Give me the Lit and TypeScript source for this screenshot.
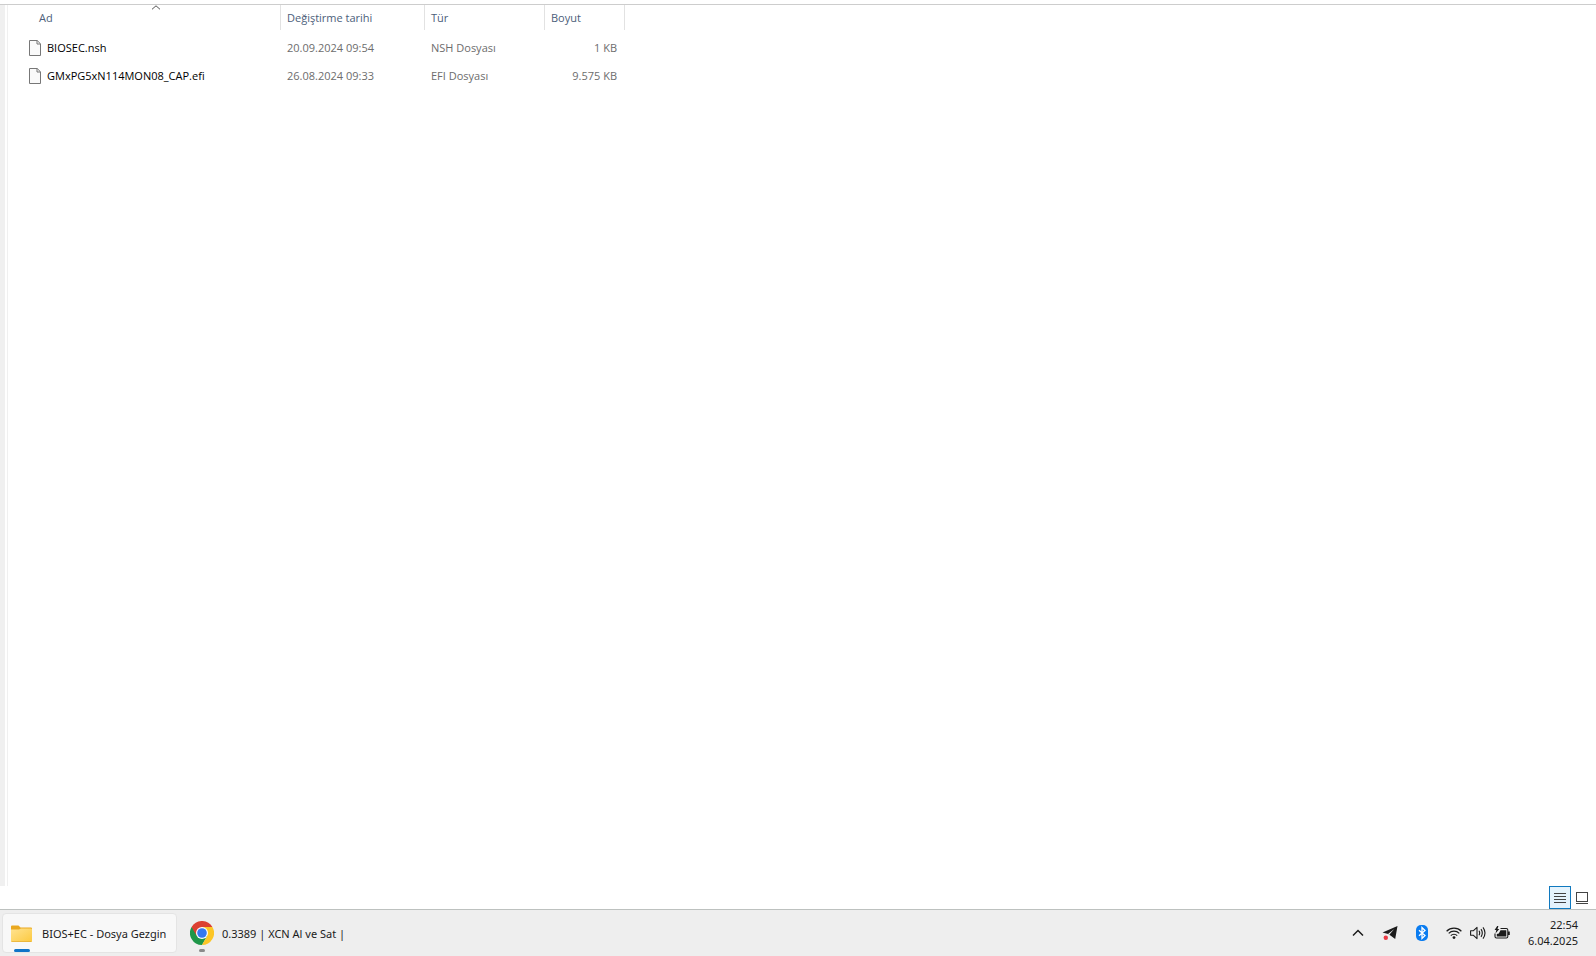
import { LitElement, html, svg, css } from "lit";
import { customElement, state } from "lit/decorators.js";

interface FileRow {
  name: string;
  modified: string;
  type: string;
  size: string;
}

const FILES: FileRow[] = [
  { name: "BIOSEC.nsh", modified: "20.09.2024 09:54", type: "NSH Dosyası", size: "1 KB" },
  { name: "GMxPG5xN114MON08_CAP.efi", modified: "26.08.2024 09:33", type: "EFI Dosyası", size: "9.575 KB" },
];

@customElement("file-list")
class FileList extends LitElement {
  static styles = css`
    :host { display: block; }
    .table { border-collapse: separate; border-spacing: 0; table-layout: fixed; width: 617px; font-size: 11px; line-height: 16px; }
    .name-col { width: 273px; }
    .date-col { width: 144px; }
    .type-col { width: 120px; }
    .size-col { width: 80px; }
    .head { padding: 0 0 4px; font-weight: 400; text-align: left; }
    .sort { position: relative; display: block; box-sizing: border-box; width: 100%; height: 25px; padding: 0 6px; border: 0; border-right: 1px solid #e2e2e2; background: none; color: #4c607a; font: inherit; text-align: left; }
    .sort.first { padding-left: 31px; }
    .caret { position: absolute; top: 0; left: 50%; width: 10px; height: 5px; margin-left: 7px; }
    .cell { height: 28px; padding: 0 8px 0 6px; color: #6d6d6d; white-space: nowrap; }
    .cell.name { padding-left: 21px; color: #000; }
    .cell.size { text-align: right; }
    .file { display: flex; align-items: center; gap: 6px; }
    .icon { flex: none; width: 12px; height: 16px; }
  `;

  render() {
    return html`
      <table class="table">
        <colgroup><col class="name-col"><col class="date-col"><col class="type-col"><col class="size-col"></colgroup>
        <thead>
          <tr>
            <th class="head" aria-sort="ascending">
              <button class="sort first">Ad
                <svg class="caret" viewBox="0 0 10 5" aria-hidden="true"><path d="M1 4.3 5 .8l4 3.5" fill="none" stroke="#555" /></svg>
              </button>
            </th>
            <th class="head"><button class="sort">Değiştirme tarihi</button></th>
            <th class="head"><button class="sort">Tür</button></th>
            <th class="head"><button class="sort">Boyut</button></th>
          </tr>
        </thead>
        <tbody>
          ${FILES.map((f) => html`
            <tr>
              <td class="cell name">
                <div class="file">
                  <svg class="icon" viewBox="0 0 12 16" aria-hidden="true">
                    <path d="M.5.5h7.700l3.300 3.300v11.700H.5z" fill="#fafafa" stroke="#777" />
                    <path d="M8 .5V4h3.500" fill="none" stroke="#777" />
                  </svg>
                  <span>${f.name}</span>
                </div>
              </td>
              <td class="cell">${f.modified}</td>
              <td class="cell">${f.type}</td>
              <td class="cell size">${f.size}</td>
            </tr>`)}
        </tbody>
      </table>
    `;
  }
}

const folder = svg`
  <path d="M0 1.500Q0 .5 1 .5h6.500l2 2H20q1 0 1 1V8H0z" fill="#e9a820" />
  <path d="M0 4.500h8l2-1h10q1 0 1 1V16q0 1-1 1H1q-1 0-1-1z" fill="url(#folder-face)" />
  <path d="M.5 16.600h20" stroke="#e3ae35" stroke-width=".8" />
  <defs><linearGradient id="folder-face" x1="0" y1="0" x2="1" y2="1"><stop offset="0" stop-color="#ffe391" /><stop offset="1" stop-color="#fcc93f" /></linearGradient></defs>`;

const chrome = svg`
  <path d="M1.600 6A12 12 0 0 0 12 24l5.200-9L12 12z" fill="#1e9648" />
  <path d="M12 6h10.400A12 12 0 0 1 12 24l5.200-9z" fill="#fcc626" />
  <path d="M1.600 6A12 12 0 0 1 22.400 6H12l-5.200 9z" fill="#dc4032" />
  <circle cx="12" cy="12" r="6" fill="#fff" />
  <circle cx="12" cy="12" r="4.800" fill="#3478f0" />`;

@customElement("task-bar")
class TaskBar extends LitElement {
  static styles = css`
    :host { display: flex; align-items: center; justify-content: space-between; box-sizing: border-box; height: 47px; border-top: 1px solid #bdc1bf; background: #eee; color: #1b1b1b; font: 11px/16px "Noto Sans", "Open Sans", sans-serif; }
    .apps { display: flex; gap: 4px; padding-left: 2px; }
    .app { position: relative; display: flex; align-items: center; box-sizing: border-box; width: 175px; height: 40px; padding: 0 8px; border: 1px solid transparent; border-radius: 4px; background: none; color: inherit; font: inherit; text-align: left; }
    .app.active { background: #f8f8f8; border-color: #e4e4e4; }
    .label { overflow: hidden; padding-top: 1px; white-space: nowrap; }
    .folder { flex: none; width: 21px; height: 17px; margin-right: 10px; }
    .active .label { margin-right: -4px; }
    .chrome { flex: none; width: 24px; height: 24px; margin-right: 8px; }
    .mark { position: absolute; bottom: 0; left: 17px; width: 6px; height: 3px; border-radius: 2px; background: #8a8a8a; }
    .active .mark { left: 11px; width: 16px; background: #0f74c8; }
    .tray { display: flex; align-items: center; padding-right: 18px; }
    .tool { display: flex; align-items: center; justify-content: center; width: 32px; height: 40px; padding: 0; border: 0; background: none; }
    .status { display: flex; align-items: center; gap: 8px; height: 40px; padding: 0 8px; border: 0; background: none; }
    .glyph { width: 16px; height: 16px; }
    .clock { width: 60px; padding: 0; border: 0; background: none; color: inherit; font: inherit; text-align: right; white-space: nowrap; }
    .line { display: block; }
  `;

  render() {
    return html`
      <div class="apps">
        <button class="app active">
          <svg class="folder" viewBox="0 0 21 17" aria-hidden="true">${folder}</svg>
          <span class="label">BIOS+EC - Dosya Gezgin</span>
          <span class="mark"></span>
        </button>
        <button class="app">
          <svg class="chrome" viewBox="0 0 24 24" aria-hidden="true">${chrome}</svg>
          <span class="label">0.3389 | XCN Al ve Sat |</span>
          <span class="mark"></span>
        </button>
      </div>
      <div class="tray">
        <button class="tool" aria-label="Gizli simgeleri göster">
          <svg class="glyph" viewBox="0 0 16 16"><path d="m3 10.500 5-5 5 5" fill="none" stroke="#1b1b1b" stroke-width="1.500" /></svg>
        </button>
        <button class="tool" aria-label="Telegram">
          <svg class="glyph" viewBox="0 0 16 16"><path d="M.5 7.600 15.500 1l-2.300 13-4.400-3.200-2.600-1.900L.5 7.600z" fill="#1b1b1b" /><path d="m6.300 8.700 6-4.700-4.800 5.500-.6 2.600z" fill="#eee" /><circle cx="3.800" cy="12.800" r="2.200" fill="#ea3a44" /></svg>
        </button>
        <button class="tool" aria-label="Bluetooth">
          <svg class="glyph" viewBox="0 0 16 16"><rect x="2" width="12" height="16" rx="5" fill="#0a7cf0" /><path d="m5 5.200 6 5.400L8 13.400V2.600l3 2.800-6 5.400" fill="none" stroke="#fff" stroke-width="1.300" /></svg>
        </button>
        <button class="status" aria-label="Ağ, ses ve pil">
          <svg class="glyph" viewBox="0 0 16 16"><g fill="none" stroke="#1b1b1b" stroke-width="1.200"><path d="M.6 6.200a10.500 10.500 0 0 1 14.800 0M2.700 8.400a7.500 7.500 0 0 1 10.600 0M4.800 10.600a4.500 4.500 0 0 1 6.400 0" /></g><circle cx="8" cy="12.600" r="1.400" fill="#1b1b1b" /></svg>
          <svg class="glyph" viewBox="0 0 16 16"><g fill="none" stroke="#1b1b1b" stroke-width="1.100" stroke-linejoin="round"><path d="M.6 5.800h2.600L7 2.400v11.200l-3.800-3.400H.6zM9 5.800q1.400 2.200 0 4.400M11 4.100q2.600 3.900 0 7.800M13 2.400q4 5.600 0 11.200" /></g></svg>
          <svg class="glyph" viewBox="0 0 16 16"><path d="M6.500 3.500h5.800q1.500 0 1.500 1.500v6.500q0 1.500-1.500 1.500H2.500Q1 13 1 11.500V8.500" fill="none" stroke="#1b1b1b" stroke-width="1.100" /><path d="M6.500 5.200h5.800v6.200H2.800V9l2-.5z" fill="#1b1b1b" /><path d="M14 6.500h1.800v3.500H14z" fill="#1b1b1b" /><path d="M3.200 1 .6 5h1.700l-.8 3.400L5.300 4H3.500l.9-3z" fill="#1b1b1b" /></svg>
        </button>
        <button class="clock"><span class="line">22:54</span><span class="line">6.04.2025</span></button>
      </div>
    `;
  }
}

@customElement("app-root")
class AppRoot extends LitElement {
  static styles = css`
    :host { display: flex; flex-direction: column; box-sizing: border-box; min-height: 100vh; padding-top: 4px; background: #fff; font-family: "Open Sans", "Noto Sans", sans-serif; }
    .main { flex: 1; display: flex; border-top: 1px solid #cdcdcd; }
    .edge { box-sizing: border-box; width: 8px; border-left: 5px solid #f0f0f0; border-right: 1px solid #f0f0f0; }
    .views { display: flex; justify-content: flex-end; gap: 1px; padding-right: 4px; }
    .view { display: flex; align-items: center; justify-content: center; box-sizing: border-box; width: 20px; height: 23px; padding: 0; border: 1px solid transparent; background: none; }
    .view.on { width: 22px; border-color: #1079bf; background: #e5f3fc; }
    .glyph { width: 12px; height: 12px; }
  `;

  @state() private view: "details" | "tiles" = "details";

  render() {
    return html`
      <main class="main">
        <div class="edge"></div>
        <file-list></file-list>
      </main>
      <div class="views">
        <button class="view ${this.view === "details" ? "on" : ""}" aria-label="Ayrıntılar" @click=${() => (this.view = "details")}>
          <svg class="glyph" viewBox="0 0 12 12"><path d="M0 1.500h12M0 4.500h12M0 7.500h12M0 10.500h12" stroke="#444" shape-rendering="crispEdges" /></svg>
        </button>
        <button class="view ${this.view === "tiles" ? "on" : ""}" aria-label="Büyük simgeler" @click=${() => (this.view = "tiles")}>
          <svg class="glyph" viewBox="0 0 12 12"><path d="M.5.5h11v9H.5zM0 11.500h12" fill="none" stroke="#444" shape-rendering="crispEdges" /></svg>
        </button>
      </div>
      <task-bar></task-bar>
    `;
  }
}
